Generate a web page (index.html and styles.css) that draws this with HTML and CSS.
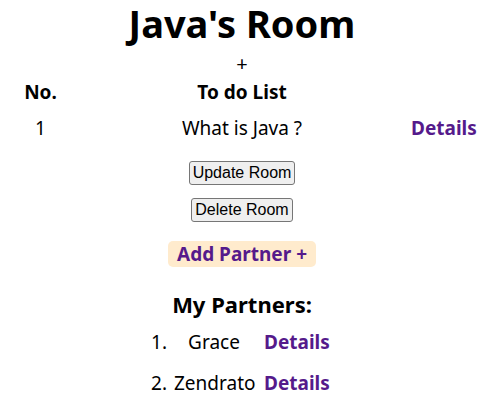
FILE: index.html
```html
<!DOCTYPE html>
<html lang="en">
<head>
<meta charset="utf-8">
<title>Java's Room</title>
<link rel="stylesheet" href="styles.css">
</head>
<body>
<div class="page">
  <h1 class="title">Java's Room</h1>
  <div class="plus">+</div>
  <table class="todo">
    <thead>
      <tr><th class="col-no">No.</th><th>To do List</th><th class="col-act"></th></tr>
    </thead>
    <tbody>
      <tr><td>1</td><td>What is Java ?</td><td><a class="link" href="#">Details</a></td></tr>
    </tbody>
  </table>
  <div class="actions">
    <button class="btn" type="button">Update Room</button>
    <button class="btn" type="button">Delete Room</button>
  </div>
  <div class="add-wrap"><a class="add" href="#">Add Partner +</a></div>
  <h2 class="subtitle">My Partners:</h2>
  <ol class="partners">
    <li class="partner"><span class="num">1.</span><span class="name">Grace</span><a class="link" href="#">Details</a></li>
    <li class="partner"><span class="num">2.</span><span class="name">Zendrato</span><a class="link" href="#">Details</a></li>
  </ol>
</div>
</body>
</html>
```

FILE: styles.css
```css
html, body {
  margin: 0;
  padding: 0;
  background: #fff;
}
body {
  font-family: "Noto Sans", "Open Sans", sans-serif;
  color: #000;
}
.page {
  width: 468px;
  margin-left: 8px;
  padding-top: 2px;
  font-size: 19px;
}
.title {
  margin: 0;
  font-size: 38px;
  line-height: 42px;
  font-weight: 700;
  text-align: center;
}
.plus {
  margin-top: 8px;
  font-size: 20px;
  line-height: 24px;
  text-align: center;
}
.todo {
  width: 100%;
  margin-top: 4px;
  border-collapse: collapse;
  table-layout: fixed;
}
.todo th, .todo td {
  padding: 0;
  text-align: center;
  line-height: 24px;
}
.todo th {
  font-size: 19px;
  font-weight: 700;
}
.todo td {
  padding-top: 12px;
  font-size: 19px;
}
.col-no, .col-act {
  width: 65px;
}
.link {
  color: #551a8b;
  font-weight: 700;
  text-decoration: none;
}
.actions {
  margin-top: 21px;
  display: flex;
  flex-direction: column;
  align-items: center;
  gap: 13px;
}
.btn {
  font-family: "Liberation Sans", Arial, sans-serif;
  font-size: 16px;
  line-height: 18px;
  padding: 2px 3px;
  border: 1px solid #767676;
  border-radius: 3px;
  background: #efefef;
  color: #000;
}
.add-wrap {
  margin-top: 19px;
  display: flex;
  justify-content: center;
}
.add {
  display: block;
  padding: 0 9px;
  line-height: 26px;
  font-size: 19px;
  font-weight: 700;
  color: #551a8b;
  background: #ffebcd;
  border-radius: 5px;
  text-decoration: none;
}
.subtitle {
  margin: 23px 0 0;
  font-size: 22px;
  line-height: 28px;
  font-weight: 700;
  text-align: center;
}
.partners {
  list-style: none;
  margin: 12px 0 0;
  padding: 0 0 0 139px;
  display: flex;
  flex-direction: column;
  gap: 17px;
  font-size: 19px;
  line-height: 24px;
}
.partner {
  display: flex;
}
.num {
  width: 20px;
  text-align: right;
}
.name {
  width: 80px;
  margin-left: 7px;
  margin-right: 10px;
  text-align: center;
}
```
